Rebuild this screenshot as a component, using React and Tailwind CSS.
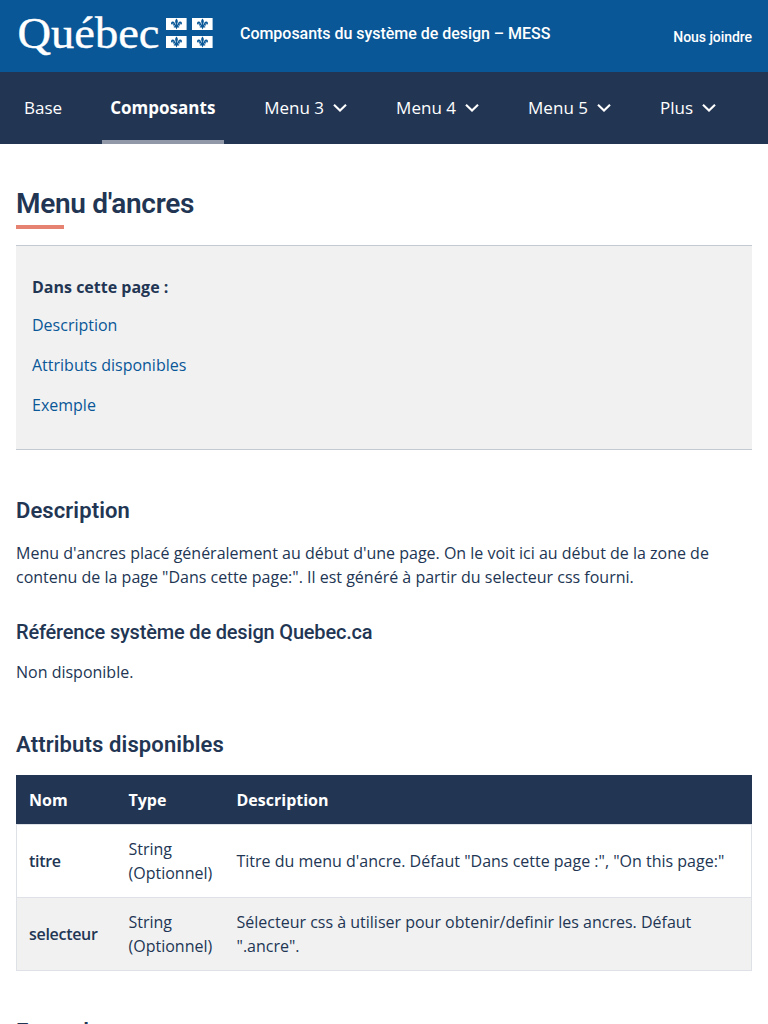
const flags = [
  [166, 18],
  [192, 18],
  [166, 36],
  [192, 36],
];

function Logo() {
  return (
    <svg className="block h-[72px] w-[216px]" viewBox="0 0 216 72" fill="#fff" role="img" aria-label="Québec">
      <g fontFamily="'Liberation Serif', serif" stroke="#fff" strokeWidth="0.4">
        <text x="17.5" y="48" fontSize="44" textLength="142" lengthAdjust="spacingAndGlyphs">Québec</text>
      </g>
      {flags.map(([x, y]) => (
        <g key={`${x}-${y}`} transform={`translate(${x} ${y})`}>
          <rect width="20.6" height="12" />
          <path
            fill="#095797"
            d="M10.5 0.6C9.4 2 8.9 3 9.3 4.2L9.8 6.4H9.1C8.9 4.4 8 3.3 6.7 3.4C5.3 3.5 4.6 4.8 5.2 6C5.5 6.6 6.2 6.7 6.6 6.2C6.8 5.8 6.7 5.4 6.9 5.3C7.5 5.4 7.6 6 7.4 6.6H7V7.6H9C8.8 8.3 8.2 8.8 7.5 8.7C7.7 9.6 8.7 9.9 9.5 9.2L10.5 11.4L11.5 9.2C12.3 9.9 13.3 9.6 13.5 8.7C12.8 8.8 12.2 8.3 12 7.6H14V6.6H13.6C13.4 6 13.5 5.4 14.1 5.3C14.3 5.4 14.2 5.8 14.4 6.2C14.8 6.7 15.5 6.6 15.8 6C16.4 4.8 15.7 3.5 14.3 3.4C13 3.3 12.1 4.4 11.9 6.4H11.2L11.7 4.2C12.1 3 11.6 2 10.5 0.6Z"
          />
        </g>
      ))}
    </svg>
  );
}

function Chevron() {
  return (
    <svg className="ml-2 h-4 w-4" viewBox="0 0 16 16" fill="none" stroke="#fff" strokeWidth="2.1">
      <path d="M2 4.7L8 10.6L14 4.7" />
    </svg>
  );
}

function MenuItem({ label }) {
  return (
    <a className="flex h-[72px] items-center px-2">
      {label}
      <Chevron />
    </a>
  );
}

const rows = [
  { name: "titre", text: "Titre du menu d'ancre. Défaut \"Dans cette page :\", \"On this page:\"", bg: "bg-white" },
  { name: "selecteur", text: "Sélecteur css à utiliser pour obtenir/definir les ancres. Défaut \".ancre\".", bg: "bg-[#f1f1f2]" },
];

export default function App() {
  return (
    <div className="h-[1024px] w-[768px] overflow-hidden bg-white font-['Open_Sans',sans-serif] text-base leading-6 text-[#223654]">
      <header className="flex h-[72px] bg-[#095797] font-['Roboto',sans-serif] text-white">
        <Logo />
        <div className="ml-6 pt-[22px] text-base font-medium tracking-[-0.03px]">
          Composants du système de design – MESS
        </div>
        <a className="mr-4 ml-auto pt-[27px] text-sm leading-5 font-medium tracking-[-0.06px]">Nous joindre</a>
      </header>
      <nav className="flex h-[72px] gap-8 bg-[#223654] pl-4 text-[17px] tracking-[0.02px] text-white">
        <a className="flex h-[72px] items-center px-2">Base</a>
        <a className="flex h-[72px] w-[122px] items-center border-y-4 border-t-transparent border-b-[#9199a9] px-2 font-bold">
          Composants
        </a>
        <MenuItem label="Menu 3" />
        <MenuItem label="Menu 4" />
        <MenuItem label="Menu 5" />
        <MenuItem label="Plus" />
      </nav>
      <main className="px-4 pt-11">
        <h1 className="font-['Roboto',sans-serif] text-[28px] leading-8 font-semibold tracking-[-0.31px]">Menu d'ancres</h1>
        <div className="mt-[5px] h-1 w-12 bg-[#e58271]" />
        <section className="mt-4 h-[205px] border-y border-[#c5cad2] bg-[#f1f1f2] px-4 pt-[29px]">
          <div className="font-bold">Dans cette page :</div>
          <ul className="mt-3.5 flex flex-col gap-4 text-[#095797]">
            <li>Description</li>
            <li>Attributs disponibles</li>
            <li>Exemple</li>
          </ul>
        </section>
        <h2 className="mt-[49px] font-['Roboto',sans-serif] text-[22px] leading-6 font-semibold tracking-[0.1px]">
          Description
        </h2>
        <p className="mt-[18px]">
          Menu d'ancres placé généralement au début d'une page. On le voit ici au début de la zone de contenu de la page
          "Dans cette page:". Il est généré à partir du selecteur css fourni.
        </p>
        <h3 className="mt-[31px] font-['Roboto',sans-serif] text-xl leading-6 font-medium tracking-[-0.18px]">
          Référence système de design Quebec.ca
        </h3>
        <p className="mt-4">Non disponible.</p>
        <h2 className="mt-[49px] font-['Roboto',sans-serif] text-[22px] leading-6 font-semibold tracking-[0.13px]">
          Attributs disponibles
        </h2>
        <table className="mt-[18px] w-full table-fixed border-collapse border border-[#dee2e6] text-left">
          <colgroup>
            <col className="w-[100px]" />
            <col className="w-[108px]" />
            <col />
          </colgroup>
          <thead className="bg-[#223654] text-white">
            <tr className="h-[49px] border border-[#223654] border-b-[#dee2e6]">
              <th className="px-3 font-bold">Nom</th>
              <th className="px-3 font-bold">Type</th>
              <th className="px-3 font-bold">Description</th>
            </tr>
          </thead>
          <tbody>
            {rows.map((row) => (
              <tr key={row.name} className={`h-[73px] border-t border-[#dee2e6] ${row.bg}`}>
                <td className="px-3 font-semibold tracking-[-0.3px]">{row.name}</td>
                <td className="px-3">
                  String
                  <br />
                  (Optionnel)
                </td>
                <td className="px-3">{row.text}</td>
              </tr>
            ))}
          </tbody>
        </table>
        <h2 className="mt-[49px] font-['Roboto',sans-serif] text-[22px] leading-6 font-semibold tracking-[0.1px]">
          Exemple
        </h2>
      </main>
    </div>
  );
}
